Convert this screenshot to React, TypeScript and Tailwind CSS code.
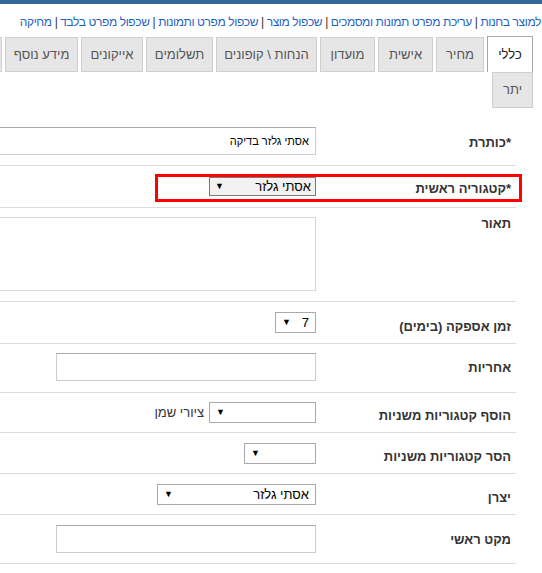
import { Fragment } from 'react'

const actionLinks = [
  'למוצר בחנות',
  'עריכת מפרט תמונות ומסמכים',
  'שכפול מוצר',
  'שכפול מפרט ותמונות',
  'שכפול מפרט בלבד',
  'מחיקה',
]

const tabs = [
  { label: 'כללי', width: 'w-[46px]', active: true },
  { label: 'מחיר', width: 'w-[48px]' },
  { label: 'אישית', width: 'w-[55px]' },
  { label: 'מועדון', width: 'w-[55px]' },
  { label: 'הנחות \\ קופונים', width: 'w-[101px]' },
  { label: 'תשלומים', width: 'w-[67px]' },
  { label: 'אייקונים', width: 'w-[62px]' },
  { label: 'מידע נוסף', width: 'w-[73px]' },
  { label: '', width: 'w-[70px]' },
]

function Tab({ label, width, active }: { label: string; width: string; active?: boolean }) {
  return (
    <div
      className={
        active
          ? `${width} shrink-0 h-[36px] -mt-px bg-white border border-b-0 border-[#a8a8a8] flex items-center justify-center text-[13px] text-[#222]`
          : `${width} shrink-0 h-[35px] bg-[#e6e6e6] border border-[#cfcfcf] flex items-center justify-center text-[13px] text-[#555]`
      }
    >
      {label}
    </div>
  )
}

function Select({ value, width, tinted }: { value?: string; width: string; tinted?: boolean }) {
  return (
    <div
      className={
        tinted
          ? `${width} h-[19px] border border-[#7a7a7a] bg-[#f2f2f2] flex items-center justify-between pr-[4px] pl-[5px] text-[13px] text-black`
          : `${width} h-[21px] border border-[#a9a9a9] bg-white flex items-center justify-between pr-[6px] pl-[6px] text-[13px] text-black`
      }
    >
      <span>{value}</span>
      <span className="text-[9px] leading-none">▼</span>
    </div>
  )
}

function Row({
  label,
  height,
  labelTop,
  fieldTop,
  required,
  children,
}: {
  label: string
  height: string
  labelTop: string
  fieldTop: string
  required?: boolean
  children?: React.ReactNode
}) {
  return (
    <div className={`${height} flex border-b border-[#dcdcdc]`}>
      <div className={`w-[200px] shrink-0 pr-[5px] ${labelTop} text-[13px] leading-[16px] font-bold text-[#333]`}>
        {required && <span>*</span>}
        {label}
      </div>
      <div className={`flex-1 flex items-start ${fieldTop}`}>{children}</div>
    </div>
  )
}

export default function App() {
  return (
    <div
      dir="rtl"
      className="w-[542px] h-[573px] overflow-hidden bg-white font-['Liberation_Sans',Arial,sans-serif]"
    >
      <div className="h-[4px] bg-[#336699]" />

      {/* product actions */}
      <div className="h-[32px] pt-[10px] pr-[1px] whitespace-nowrap text-[12px] leading-[16px] tracking-[-0.4px]">
        {actionLinks.map((link, i) => (
          <Fragment key={link}>
            {i > 0 && <span className="text-[#333]"> | </span>}
            <span className="text-[#1f63c6]">{link}</span>
          </Fragment>
        ))}
      </div>

      {/* tabs */}
      <div className="pr-[9px]">
        <div className="flex gap-[3px] h-[36px] pt-px">
          {tabs.map((t, i) => (
            <Tab key={i} {...t} />
          ))}
        </div>
        <div className="flex">
          <div className="w-[41px] h-[36px] bg-[#e6e6e6] border border-[#cfcfcf] flex items-center justify-center text-[13px] text-[#555]">
            יתר
          </div>
        </div>
      </div>

      {/* general form */}
      <div className="mr-[26px]">
        <Row label="כותרת" required height="h-[58px]" labelTop="pt-[27px]" fieldTop="pt-[19px]">
          <div className="w-[340px] shrink-0 h-[28px] border border-[#cdcdcd] border-t-[#a9a9a9] pr-[6px] flex items-center text-[11px] text-black">
            אסתי גלזר בדיקה
          </div>
        </Row>

        <div className="relative">
          <Row label="קטגוריה ראשית" required height="h-[42px]" labelTop="pt-[15px]" fieldTop="pt-[11px]">
            <Select value="אסתי גלזר" width="w-[107px]" tinted />
          </Row>
          <div className="absolute top-[8px] right-[-6px] w-[367px] h-[28px] border-[3px] border-[#ff0000] pointer-events-none" />
        </div>

        <Row label="תאור" height="h-[94px]" labelTop="pt-[8px]" fieldTop="pt-[9px]">
          <div className="w-[340px] shrink-0 h-[74px] border border-[#d6d6d6]" />
        </Row>

        <Row label="זמן אספקה (בימים)" height="h-[42px]" labelTop="pt-[17px]" fieldTop="pt-[10px]">
          <Select value="7" width="w-[41px]" />
        </Row>

        <Row label="אחריות" height="h-[49px]" labelTop="pt-[16px]" fieldTop="pt-[9px]">
          <div className="w-[260px] h-[28px] border border-[#cdcdcd] border-t-[#a9a9a9]" />
        </Row>

        <Row label="הוסף קטגוריות משניות" height="h-[40px]" labelTop="pt-[15px]" fieldTop="pt-[9px]">
          <Select width="w-[107px]" />
          <span className="mr-[5px] text-[13px] leading-[21px] text-[#333]">ציורי שמן</span>
        </Row>

        <Row label="הסר קטגוריות משניות" height="h-[41px]" labelTop="pt-[16px]" fieldTop="pt-[10px]">
          <Select width="w-[72px]" />
        </Row>

        <Row label="יצרן" height="h-[41px]" labelTop="pt-[16px]" fieldTop="pt-[10px]">
          <Select value="אסתי גלזר" width="w-[159px]" />
        </Row>

        <Row label="מקט ראשי" height="h-[49px]" labelTop="pt-[17px]" fieldTop="pt-[10px]">
          <div className="w-[260px] h-[28px] border border-[#cdcdcd] border-t-[#a9a9a9]" />
        </Row>
      </div>
    </div>
  )
}
